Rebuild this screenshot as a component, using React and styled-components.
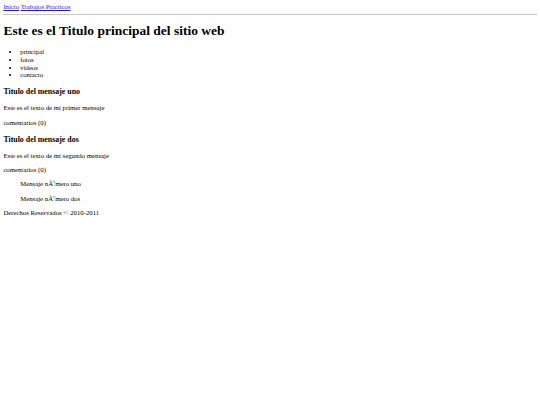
import React from "react";
import styled, { createGlobalStyle } from "styled-components";

// The reference is a 1280px-wide page shown at 540px: every length is scaled.
const S = 540 / 1280;
const px = (v) => `${(v * S).toFixed(3)}px`;

const Global = createGlobalStyle`
  html { background: #fff; }
  body {
    margin: ${px(8)};
    font-family: "Liberation Serif", "Times New Roman", serif;
    font-size: ${px(16)};
    line-height: ${px(18.2)};
    color: #000;
  }
`;

const Nav = styled.div`
  display: block;
`;

const NavLink = styled.a`
  color: #1a1aee;
  text-decoration: underline;
  cursor: pointer;
`;

const Rule = styled.hr`
  margin: ${px(7)} 0;
  height: 0;
  border: none;
  border-top: 1px solid #c8c8c8;
`;

const Title = styled.h1`
  font-size: ${px(32)};
  line-height: ${px(35)};
  font-weight: bold;
  margin: ${px(21.44)} 0 ${px(23)};
`;

const Menu = styled.ul`
  margin: ${px(16)} 0;
  padding-left: ${px(40)};
  list-style: disc;
`;

const PostTitle = styled.h3`
  font-size: ${px(18.72)};
  line-height: ${px(21.5)};
  font-weight: bold;
  margin: ${px(19.5)} 0 ${px(18.72)};
`;

const Paragraph = styled.p`
  margin: ${px(16)} 0;
`;

const Quote = styled.blockquote`
  margin: ${px(16)} ${px(40)};
`;

const Footer = styled.div`
  margin: ${px(16)} 0;
`;

export default function App() {
  return (
    <>
      <Global />
      <Nav>
        <NavLink>Inicio</NavLink> <NavLink>Trabajos Practicos</NavLink>
      </Nav>
      <Rule />
      <Title>Este es el Titulo principal del sitio web</Title>
      <Menu>
        <li>principal</li>
        <li>fotos</li>
        <li>videos</li>
        <li>contacto</li>
      </Menu>
      <PostTitle>Titulo del mensaje uno</PostTitle>
      <Paragraph>Este es el texto de mi primer mensaje</Paragraph>
      <Paragraph>comentarios (0)</Paragraph>
      <PostTitle>Titulo del mensaje dos</PostTitle>
      <Paragraph>Este es el texto de mi segundo mensaje</Paragraph>
      <Paragraph>comentarios (0)</Paragraph>
      <Quote>
        <Paragraph>Mensaje nÃºmero uno</Paragraph>
        <Paragraph>Mensaje nÃºmero dos</Paragraph>
      </Quote>
      <Footer>Derechos Reservados © 2010-2011</Footer>
    </>
  );
}
